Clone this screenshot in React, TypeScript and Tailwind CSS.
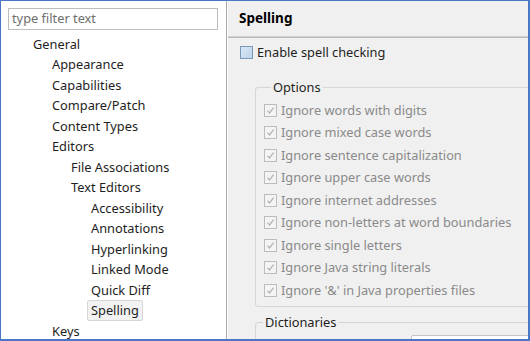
import React from 'react';

interface TreeItem {
  label: string;
  level: number;
  selected?: boolean;
}

const treeItems: TreeItem[] = [
  { label: 'General', level: 0 },
  { label: 'Appearance', level: 1 },
  { label: 'Capabilities', level: 1 },
  { label: 'Compare/Patch', level: 1 },
  { label: 'Content Types', level: 1 },
  { label: 'Editors', level: 1 },
  { label: 'File Associations', level: 2 },
  { label: 'Text Editors', level: 2 },
  { label: 'Accessibility', level: 3 },
  { label: 'Annotations', level: 3 },
  { label: 'Hyperlinking', level: 3 },
  { label: 'Linked Mode', level: 3 },
  { label: 'Quick Diff', level: 3 },
  { label: 'Spelling', level: 3, selected: true },
  { label: 'Keys', level: 1 },
];

const options = [
  'Ignore words with digits',
  'Ignore mixed case words',
  'Ignore sentence capitalization',
  'Ignore upper case words',
  'Ignore internet addresses',
  'Ignore non-letters at word boundaries',
  'Ignore single letters',
  'Ignore Java string literals',
  "Ignore '&' in Java properties files",
];

// indent per tree level, written out so tailwind picks them up
const indent = ['pl-[32px]', 'pl-[51px]', 'pl-[70px]', 'pl-[90px]'];

const DisabledCheck = () => (
  <span className="w-[13px] h-[13px] border border-[#bcbcbc] bg-[#f4f4f4] flex items-center justify-center mr-[4px] shrink-0">
    <svg width="9" height="9" viewBox="0 0 9 9" fill="none">
      <path d="M1.5 4.8 L3.6 7 L7.6 1.6" stroke="#b4b4b4" strokeWidth="1.3" />
    </svg>
  </span>
);

export default function App() {
  return (
    <div
      className="w-[530px] h-[341px] flex border-t border-l border-r-2 border-b-2 border-[#4a76c6] overflow-hidden text-[12.8px] text-[#1e1e1e]"
      style={{ fontFamily: '"Noto Sans", "Open Sans", sans-serif' }}
    >
      {/* preference tree */}
      <div className="w-[226px] shrink-0 bg-white border-r border-[#a9a9a9] flex flex-col">
        <div className="pl-[7px] pt-[7px] pr-[8px] shrink-0">
          <div className="h-[22px] border border-[#bdbdbd] flex items-center pl-[3px] text-[#6e6e6e]">
            type filter text
          </div>
        </div>
        <div className="pt-[4px] shrink-0">
          {treeItems.map((item) => (
            <div key={item.label} className={`h-[20.5px] flex items-center ${indent[item.level]}`}>
              {item.selected ? (
                <span className="-ml-[4px] h-[21px] px-[3px] flex items-center bg-[#f2f2f2] border border-[#d6d6d6] rounded-[2px]">
                  {item.label}
                </span>
              ) : (
                <span>{item.label}</span>
              )}
            </div>
          ))}
        </div>
      </div>

      {/* page */}
      <div className="flex-1 bg-[#f0f0f0] border-l border-white flex flex-col">
        <div className="h-[35px] shrink-0 flex items-center pl-[11px] font-bold text-[13.5px] text-black">Spelling</div>
        <div className="h-px shrink-0 bg-[#d2d2d2]" />
        <div className="h-px shrink-0 bg-[#b9b9b9]" />

        <div className="pl-[12px] pt-[3px] shrink-0 flex items-center h-[26px]">
          <span className="w-[13px] h-[13px] border border-[#7a98b8] bg-gradient-to-br from-[#dbe8f5] to-[#bcd3ea] mr-[4px]" />
          <span>Enable spell checking</span>
        </div>

        <fieldset className="shrink-0 ml-[27px] mt-[14px] -mr-[6px] border border-[#d6d6d6] rounded-[3px] pl-[8px] pb-[4px]">
          <legend className="ml-[7px] px-[2px] text-[#1e1e1e]">Options</legend>
          <div className="pt-[2px]">
            {options.map((opt) => (
              <div key={opt} className="h-[22.5px] flex items-center text-[#8a8a8a]">
                <DisabledCheck />
                <span>{opt}</span>
              </div>
            ))}
          </div>
        </fieldset>

        <fieldset className="shrink-0 ml-[27px] mt-[6px] -mr-[6px] border border-[#d6d6d6] rounded-[3px] h-[60px]">
          <legend className="ml-[7px] px-[2px] text-[#1e1e1e]">Dictionaries</legend>
          <div className="ml-[155px] mt-[3px] h-[22px] bg-white border border-[#c4c4c4] rounded-[2px]" />
        </fieldset>
      </div>
    </div>
  );
}
